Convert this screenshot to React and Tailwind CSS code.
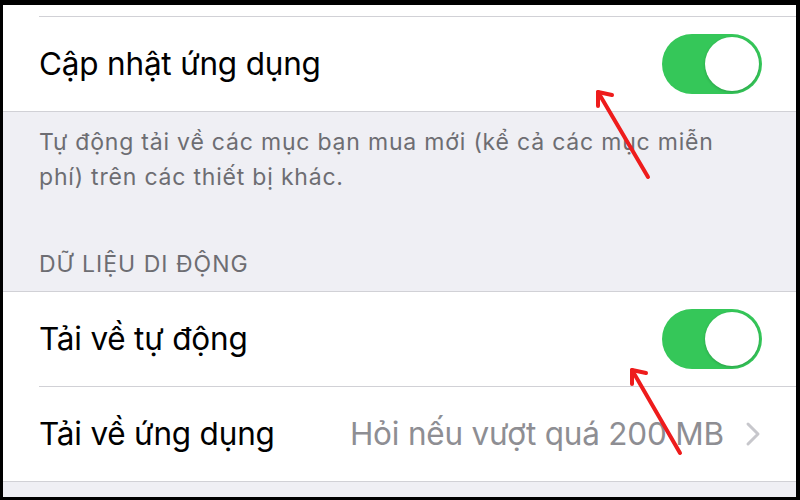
import { ChevronRight } from "lucide-react";

const font = { fontFamily: "Inter, 'Noto Sans', sans-serif" };

function Toggle() {
  return (
    <div className="w-[100px] h-[60px] rounded-full bg-[#35c759] flex items-center justify-end pr-[3px]">
      <div className="w-[54px] h-[54px] rounded-full bg-white shadow-[0_1px_3px_rgba(0,0,0,0.2)]" />
    </div>
  );
}

function Row({ label, children, inset }) {
  return (
    <div className="bg-white">
      <div className="h-[94px] flex items-center justify-between pl-[36px] pr-[34px]">
        <span className="text-[31.5px] text-black tracking-[-0.2px]">{label}</span>
        {children}
      </div>
      {inset && <div className="ml-[36px] h-px bg-[#d1d1d6]" />}
    </div>
  );
}

export default function App() {
  return (
    <div className="w-[800px] h-[500px] bg-black pt-[5px] pl-[3px] pr-[4px] pb-[3px]" style={font}>
      <div className="relative w-full h-full bg-[#efeff4] overflow-hidden flex flex-col">
        {/* tail of previous row */}
        <div className="bg-white">
          <div className="h-[11px]" />
          <div className="ml-[36px] h-px bg-[#d1d1d6]" />
        </div>

        <Row label="Cập nhật ứng dụng">
          <Toggle />
        </Row>
        <div className="h-px bg-[#d1d1d6]" />

        <div className="pl-[36px] pr-[40px] pt-[13px] text-[23px] leading-[35px] tracking-[0.8px] text-[#6d6d72]">
          Tự động tải về các mục bạn mua mới (kể cả các mục miễn phí) trên các thiết bị khác.
        </div>
        <div className="pl-[36px] pt-[56px] pb-[14px] text-[23px] leading-[26px] tracking-[1px] text-[#6d6d72] uppercase">
          Dữ liệu di động
        </div>

        <div className="h-px bg-[#d1d1d6]" />
        <Row label="Tải về tự động" inset>
          <Toggle />
        </Row>
        <Row label="Tải về ứng dụng">
          <div className="flex items-center gap-[9px]">
            <span className="text-[31.5px] text-[#8e8e93] tracking-[-0.2px]">Hỏi nếu vượt quá 200 MB</span>
            <ChevronRight className="w-[40px] h-[40px] text-[#c7c7cc] -mr-[11px]" strokeWidth={1.8} />
          </div>
        </Row>
        <div className="h-px bg-[#d1d1d6]" />

        {/* red annotation arrows */}
        <svg className="absolute left-0 top-0 pointer-events-none" width="793" height="492" viewBox="0 0 793 492">
          <g stroke="#ee1c1c" strokeWidth="4" strokeLinecap="round" fill="none">
            <path d="M645 172 L595 87" />
            <path d="M595 87 L609 90 M595 87 L595 101" />
            <path d="M677 448 L629 365" />
            <path d="M629 365 L643 368 M629 365 L629 379" />
          </g>
        </svg>
      </div>
    </div>
  );
}
